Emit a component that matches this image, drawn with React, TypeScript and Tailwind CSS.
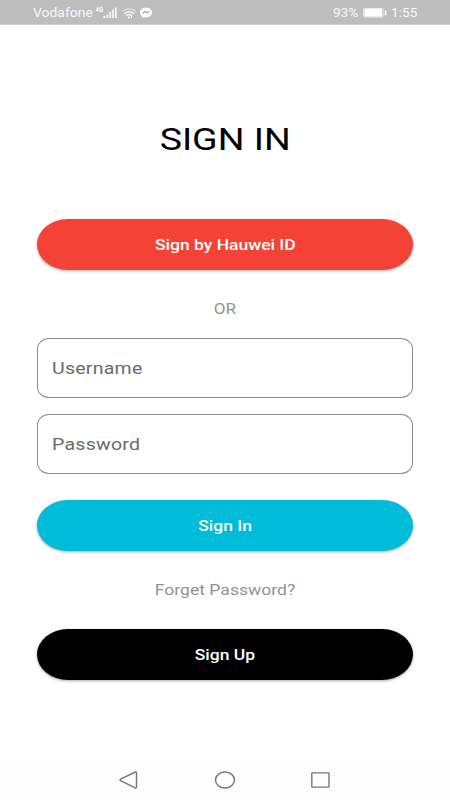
import React from "react";

const buttonBase =
  "flex h-[51px] w-full items-center justify-center rounded-[31px/25.5px] pt-px text-[15px] font-medium text-white shadow-[0_1px_3px_rgba(0,0,0,0.35)]";

function Field({ label }: { label: string }) {
  return (
    <div className="flex h-[60px] w-full items-center rounded-[12px/11px] border border-[#8c8c8c] pt-[2px] pl-[14px] text-[16.5px] tracking-[0.2px] text-[#6a6a6a]">
      <span className="origin-left scale-x-[1.185]">{label}</span>
    </div>
  );
}

function StatusBar() {
  return (
    <header className="flex h-[25px] items-center justify-between border-b border-[#cfcfcf] bg-[#bdbdbd] pt-px pr-[32px] pl-[33px] text-[12px] leading-none text-white/90">
      <div className="flex items-center">
        <span className="w-[62px] origin-left scale-x-[1.16] whitespace-nowrap">Vodafone</span>
        <svg width="60" height="16" viewBox="0 0 60 16" fill="none">
          <text x="0.5" y="6.5" fill="#fff" fontSize="7.5" fontWeight="700" textLength="7.5" lengthAdjust="spacingAndGlyphs">4G</text>
          <path d="M9.3 13v-2M12.3 13V9.5M15.2 13V7M18 13V4.5M20.8 13V2.5" stroke="#fff" strokeOpacity=".9" strokeWidth="1.7" />
          <path d="M27.5 6.3C31 3.2 37.5 3.2 41 6.3" stroke="#fff" strokeOpacity=".65" strokeWidth="1.1" />
          <path d="M29.3 8.7c2.8-2.5 7-2.5 9.8 0M31.3 11c1.7-1.5 4-1.5 5.6 0" stroke="#fff" strokeWidth="1.2" />
          <circle cx="33.9" cy="12.6" r="1" fill="#fff" />
          <path d="M36.5 13v-2.5" stroke="#fff" />
          <path d="M51 2.7c-3.4 0-6 2-6 4.7 0 1.6.8 2.8 2.1 3.7v2l2-1.1c.6.1 1.2.2 1.9.2 3.4 0 6-2.1 6-4.8s-2.6-4.7-6-4.7Z" fill="#fff" />
          <path d="m47.5 8.7 2.6-2.3 2 1.6 2.5-1.8" stroke="#aaa" strokeWidth="1.2" />
        </svg>
      </div>
      <div className="flex items-center">
        <span className="w-[30px] origin-left scale-x-[1.13]">93%</span>
        <svg width="24" height="10" viewBox="0 0 24 10" fill="none">
          <rect x=".5" y=".5" width="19.5" height="8.5" rx="1" stroke="#fff" strokeOpacity=".7" />
          <rect x="1.5" y="1" width="17.5" height="7.5" fill="#fff" />
          <path d="M22.6 2.3v5" stroke="#fff" strokeWidth="1.6" />
        </svg>
        <span className="ml-1 w-[27px] origin-left scale-x-[1.14]">1:55</span>
      </div>
    </header>
  );
}

export default function App() {
  return (
    <div className="flex h-[800px] w-[450px] flex-col overflow-hidden bg-white font-['Roboto',sans-serif]">
      <StatusBar />
      <main className="flex flex-1 flex-col items-center px-[37.4px]">
        <h1 className="mt-[95px] h-[40px] scale-x-[1.21] text-[31px] leading-[40px] text-black">SIGN IN</h1>
        <button className={`${buttonBase} mt-[59px] bg-[#f44336]`}>
          <span className="scale-x-[1.165]">Sign by Hauwei ID</span>
        </button>
        <p className="mt-[29px] h-5 scale-x-[1.14] text-[15px] leading-5 text-[#929292]">OR</p>
        <div className="mt-[19px] flex w-full flex-col gap-[16px]">
          <Field label="Username" />
          <Field label="Password" />
        </div>
        <button className={`${buttonBase} mt-[26px] bg-[#00bcd8]`}>
          <span className="scale-x-[1.165]">Sign In</span>
        </button>
        <p className="mt-[29px] h-5 scale-x-[1.17] text-[15px] leading-5 text-[#929292]">Forget Password?</p>
        <button className={`${buttonBase} mt-[29px] bg-black`}>
          <span className="scale-x-[1.165]">Sign Up</span>
        </button>
      </main>
      <nav className="flex h-10 items-center bg-[#fcfcfc] pl-[119px]">
        <svg width="212" height="20" viewBox="0 0 212 20" fill="none" stroke="#777" strokeWidth="1.4">
          <path d="m1.5 9.2 14.7-7.2q1.3-.5 1.3 1v13.8q0 1.5-1.3 1L1.5 10.7q-1-.7 0-1.5Z" />
          <ellipse cx="106" cy="10" rx="9.5" ry="8" />
          <rect x="192.8" y="2.9" width="17.2" height="14.2" rx=".6" />
        </svg>
      </nav>
    </div>
  );
}
